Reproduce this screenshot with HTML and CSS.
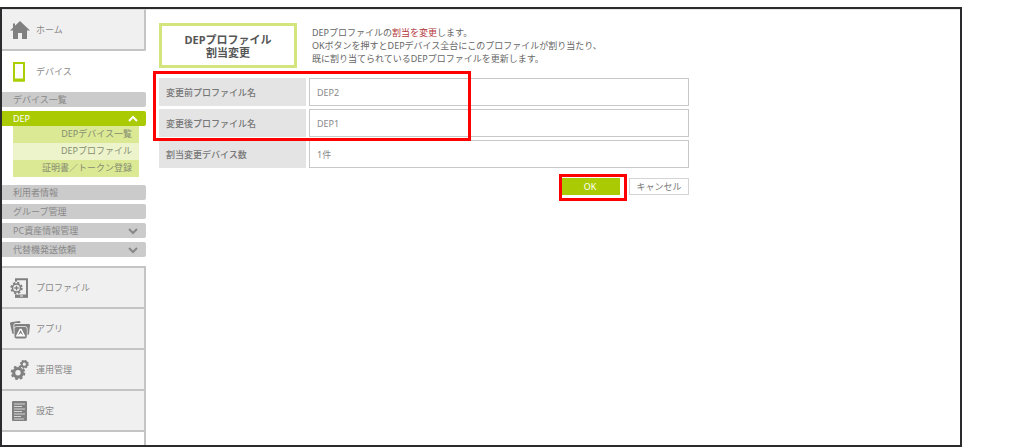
FILE: index.html
```html
<!DOCTYPE html>
<html lang="ja">
<head>
  <meta charset="UTF-8" />
  <meta name="viewport" content="width=device-width, initial-scale=1.0"/>
  <title>DEPプロファイル割当変更</title>
  <link rel="stylesheet" href="styles.css">
</head>
<body>
  <div class="frame">
    <nav class="sidebar">
      <a class="menu-item home" href="#">
        <svg class="icon" viewBox="0 0 20 20"><path fill="#808080" d="M10 1 L20 10.500 H17 V19 H12 V13 H8 V19 H3 V10.500 H0 L3 7.700 V3.500 H5 V5.800 Z"/></svg>
        ホーム
      </a>
      <a class="menu-item current" href="#">
        <svg class="icon" viewBox="0 0 20 20"><rect x="4" y="1" width="10" height="17.500" fill="#fff" stroke="#aacf06" stroke-width="2"/><path d="M3.500 18h11" stroke="#aacf06" stroke-width="3"/></svg>
        デバイス
      </a>

      <ul class="submenu">
        <li><a class="bar" href="#">デバイス一覧</a></li>
        <li>
          <a class="bar open" href="#">DEP
            <svg class="arrow" viewBox="0 0 10 8"><path d="M1 6 L5 2 L9 6"/></svg>
          </a>
          <ul class="children">
            <li><a href="#">DEPデバイス一覧</a></li>
            <li><a href="#">DEPプロファイル</a></li>
            <li><a href="#">証明書／トークン登録</a></li>
          </ul>
        </li>
        <li><a class="bar" href="#">利用者情報</a></li>
        <li><a class="bar" href="#">グループ管理</a></li>
        <li>
          <a class="bar" href="#">PC資産情報管理
            <svg class="arrow" viewBox="0 0 10 8"><path d="M1 2 L5 6 L9 2"/></svg>
          </a>
        </li>
        <li>
          <a class="bar" href="#">代替機発送依頼
            <svg class="arrow" viewBox="0 0 10 8"><path d="M1 2 L5 6 L9 2"/></svg>
          </a>
        </li>
      </ul>

      <div class="menu-lower">
        <a class="menu-item" href="#">
          <svg class="icon" viewBox="0 0 20 20">
            <path d="M6 4 V1.200 H17 V18.800 H6 V16" fill="none" stroke="#808080" stroke-width="2"/>
            <path d="M5 18h13" stroke="#808080" stroke-width="3"/>
            <path d="M10 18h3" stroke="#f0f0f0" stroke-width="1"/>
            <circle cx="6.500" cy="10" r="6.600" fill="#f0f0f0"/>
            <circle cx="6.500" cy="10" r="5.300" fill="none" stroke="#808080" stroke-width="1.800" stroke-dasharray="2.300 1.863"/>
            <circle cx="6.500" cy="10" r="4" fill="none" stroke="#808080" stroke-width="1.600"/>
            <path d="M4.300 10h4.400M6.500 7.800v4.400" stroke="#808080" stroke-width="1.300"/>
          </svg>
          プロファイル
        </a>
        <a class="menu-item" href="#">
          <svg class="icon" viewBox="0 0 20 20">
            <path fill="#808080" d="M0 4.500 Q-.2 3.500 .8 3.300 L9 2 Q10 1.900 10.300 3 L10.500 4 H5.500 Q3.300 4.200 3.400 6.500 L3.800 15 Q2.500 15.200 2.200 14 Z"/>
            <path fill="#808080" d="M4.200 6.300 Q4.300 5 5.700 5 L19 5 Q20.200 5.100 20 6.500 L19 15 Q18.700 16 17.500 16 V9.500 Q17.400 7.600 15.500 7.300 H7 Q5 7.400 4.600 8.500 Z"/>
            <rect x="4.500" y="8" width="12.300" height="11.500" rx="1.800" fill="#808080"/>
            <path fill="#fff" d="M9.700 9.800 H11.500 L15.500 17.500 H5.700 Z"/>
            <path fill="#808080" d="M10.600 11 L13.300 16.500 L10.600 14 L7.900 16.500 Z"/>
          </svg>
          アプリ
        </a>
        <a class="menu-item" href="#">
          <svg class="icon" viewBox="0 0 20 20" fill="none" stroke="#808080">
            <circle cx="8" cy="12.800" r="6.300" stroke-width="2" stroke-dasharray="2.600 2.348"/>
            <circle cx="8" cy="12.800" r="4.300" stroke-width="3.200"/>
            <circle cx="14.300" cy="4.200" r="3.700" stroke-width="1.500" stroke-dasharray="1.600 1.305"/>
            <circle cx="14.300" cy="4.200" r="2.600" stroke-width="2"/>
          </svg>
          運用管理
        </a>
        <a class="menu-item" href="#">
          <svg class="icon" viewBox="0 0 20 20">
            <rect x="2" y="0" width="15" height="20" rx="1" fill="#808080"/>
            <path d="M4 3h11M4 5.500h8M4 8h11M4 10.500h8M4 13h11M4 15.500h7M4 18h10" stroke="#e0e0e0" stroke-width=".9"/>
          </svg>
          設定
        </a>
      </div>
    </nav>

    <main>
      <div class="intro">
        <h1>DEPプロファイル<br>割当変更</h1>
        <p>DEPプロファイルの<em>割当を変更</em>します。<br>
        OKボタンを押すとDEPデバイス全台にこのプロファイルが割り当たり、<br>
        既に割り当てられているDEPプロファイルを更新します。</p>
      </div>

      <form class="assign">
        <div class="details">
          <table>
            <tr><th scope="row">変更前プロファイル名</th><td>DEP2</td></tr>
            <tr><th scope="row">変更後プロファイル名</th><td>DEP1</td></tr>
            <tr><th scope="row">割当変更デバイス数</th><td>1件</td></tr>
          </table>
          <span class="mark mark-names"></span>
        </div>
        <div class="buttons">
          <span class="ok-wrap">
            <button type="button" class="ok">OK</button>
            <span class="mark mark-ok"></span>
          </span>
          <button type="button" class="cancel">キャンセル</button>
        </div>
      </form>
    </main>
  </div>
</body>
</html>
```

FILE: styles.css
```css
* {
  box-sizing: border-box;
}

body {
  margin: 0;
  background: #fff;
  color: #777;
  font-family: "Noto Sans", "Noto Sans CJK JP", sans-serif;
  font-size: 9px;
  line-height: 13px;
}

a {
  color: inherit;
  text-decoration: none;
}

ul {
  list-style: none;
  margin: 0;
  padding: 0;
}

.frame {
  display: flex;
  min-height: calc(100vh - 7px);
  margin: 7px 62px 0 0;
  border: 2px solid #2b2b2d;
}

/* sidebar */
.sidebar {
  display: flex;
  flex-direction: column;
  flex: 0 0 144px;
}

.menu-item {
  display: flex;
  align-items: center;
  gap: 6px;
  height: 41px;
  padding-left: 8px;
  background: #f0f0f0;
  border-bottom: 2px solid #c4c4c4;
  color: #888;
}

.home {
  height: 42px;
  border-top: 1px solid #ddd;
  border-right: 2px solid #c4c4c4;
  border-bottom-right-radius: 2px;
}

.current {
  background: #fff;
  border-bottom: none;
}

.icon {
  width: 20px;
  height: 20px;
  flex: none;
}

.submenu {
  display: flex;
  flex-direction: column;
  gap: 4px;
}

.bar {
  display: flex;
  align-items: center;
  justify-content: space-between;
  height: 15px;
  padding: 0 8px 0 11px;
  background: #cbcbcb;
  border-radius: 0 2px 2px 0;
  color: #888;
}

.bar.open {
  background: #aacb04;
  color: #fff;
}

.arrow {
  width: 10px;
  height: 8px;
  fill: none;
  stroke: currentColor;
  stroke-width: 2;
}

.children {
  margin: 0 7px 4px 11px;
  text-align: right;
}

.children a {
  display: block;
  height: 17px;
  padding: 1px 7px 0 0;
  background: #dbe995;
  color: #858c70;
}

.children li:nth-child(2) a {
  background: #edf4cc;
}

.menu-lower {
  flex: 1;
  margin-top: 9px;
  border-top: 2px solid #c4c4c4;
  border-right: 2px solid #c4c4c4;
}

/* content */
main {
  flex: 1;
  min-width: 0;
  padding: 13px;
  border-top: 1px solid #e8e8e8;
}

.intro {
  display: flex;
  align-items: flex-start;
  gap: 15px;
  margin-bottom: 7px;
}

h1 {
  display: flex;
  align-items: center;
  justify-content: center;
  flex: 0 0 138px;
  height: 45px;
  margin: 0;
  border: 3px solid #d4e57d;
  color: #555;
  font-size: 11px;
  line-height: 13px;
  text-align: center;
}

.intro p {
  margin: 3px 0 0;
  color: #666;
}

.intro em {
  color: #b3363a;
  font-style: normal;
}

.assign {
  max-width: 530px;
}

.details {
  position: relative;
}

table {
  width: 100%;
  border-collapse: separate;
  border-spacing: 0 3px;
  table-layout: fixed;
}

th,
td {
  height: 28px;
  padding: 0 7px;
  text-align: left;
}

th {
  width: 150px;
  background: #e4e4e4;
  border-right: 3px solid #fff;
  color: #777;
  font-weight: 500;
}

td {
  border: 1px solid #c8c8c8;
  color: #888;
}

.buttons {
  display: flex;
  justify-content: flex-end;
  gap: 9px;
  margin-top: 7px;
}

.ok-wrap {
  position: relative;
}

button {
  display: block;
  width: 60px;
  height: 17px;
  padding: 0;
  font: inherit;
  cursor: pointer;
}

.ok {
  background: #aacb04;
  border: none;
  color: #fff;
}

.cancel {
  background: #fff;
  border: 1px solid #d4d4d4;
  color: #777;
}

/* red highlight boxes */
.mark {
  position: absolute;
  border: 3px solid #f00;
  pointer-events: none;
}

.mark-names {
  top: -4px;
  left: -6px;
  width: 318px;
  height: 70px;
}

.mark-ok {
  inset: -4px -7px -6px -1px;
}
```
